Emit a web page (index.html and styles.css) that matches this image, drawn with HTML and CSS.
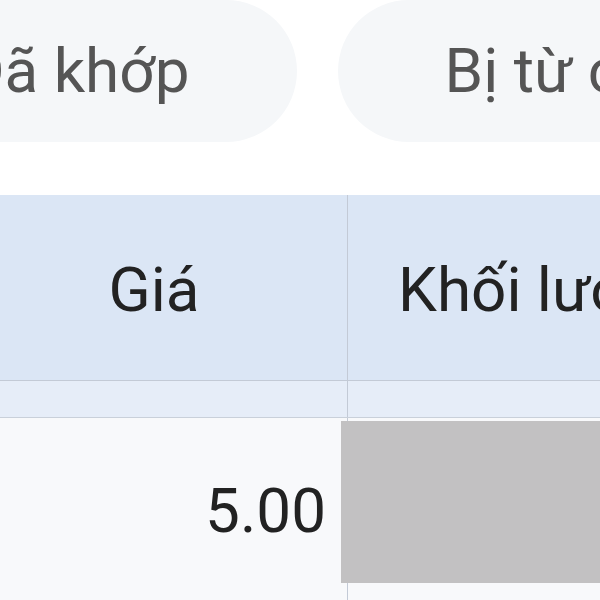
FILE: index.html
```html
<!DOCTYPE html>
<html lang="vi">
<head>
  <meta charset="UTF-8" />
  <meta name="viewport" content="width=device-width, initial-scale=1.0"/>
  <title>Lệnh</title>
  <link rel="stylesheet" href="styles.css">
</head>
<body>

  <div class="tabs">
    <div class="tab">Đã khớp</div>
    <div class="tab">Bị từ chối</div>
  </div>

  <table class="orders">
    <thead>
      <tr class="head">
        <th class="col-price">Giá</th>
        <th class="col-vol">Khối lượng</th>
      </tr>
      <tr class="sub">
        <th></th>
        <th></th>
      </tr>
    </thead>
    <tbody>
      <tr class="row">
        <td class="num">5.00</td>
        <td class="hidden-cell"><div class="mask"></div></td>
      </tr>
    </tbody>
  </table>

</body>
</html>
```

FILE: styles.css
```css
* { margin: 0; padding: 0; box-sizing: border-box; }

body {
  font-family: Roboto, "Noto Sans", sans-serif;
  background-color: #ffffff;
  color: #222222;
  width: 600px;
  height: 600px;
  overflow: hidden;
}

.tabs {
  display: flex;
  gap: 41px;
  margin-left: -144px;
  white-space: nowrap;
}

.tab {
  flex: none;
  height: 142px;
  padding: 0 107px;
  border-radius: 71px;
  background-color: #f5f7f9;
  color: #555555;
  font-size: 62px;
  line-height: 142px;
}

/* Table */
.orders {
  margin-top: 53px;
  margin-left: -40px;
  border-collapse: collapse;
  table-layout: fixed;
  width: 900px;
}

.orders th,
.orders td {
  border-left: 1px solid #c3cad6;
  font-weight: normal;
}

.col-price { width: 387px; }

.head th {
  height: 185px;
  background-color: #dbe6f5;
  font-size: 62px;
  text-align: center;
  color: #222222;
  border-bottom: 1px solid #c3cad6;
  white-space: nowrap;
  padding-top: 4px;
}

.head .col-vol {
  text-align: left;
  padding-left: 50px;
}

.sub th {
  height: 37px;
  background-color: #e6edf8;
  border-bottom: 1px solid #c9d0da;
}

.row td {
  height: 200px;
  background-color: #f8f9fb;
  vertical-align: top;
}

.num {
  font-size: 62px;
  text-align: right;
  padding-right: 21px;
  padding-top: 56px;
}

.hidden-cell { position: relative; }

.mask {
  position: absolute;
  top: 3px;
  left: -7px;
  width: 600px;
  height: 162px;
  background-color: #c2c1c2;
}
```
